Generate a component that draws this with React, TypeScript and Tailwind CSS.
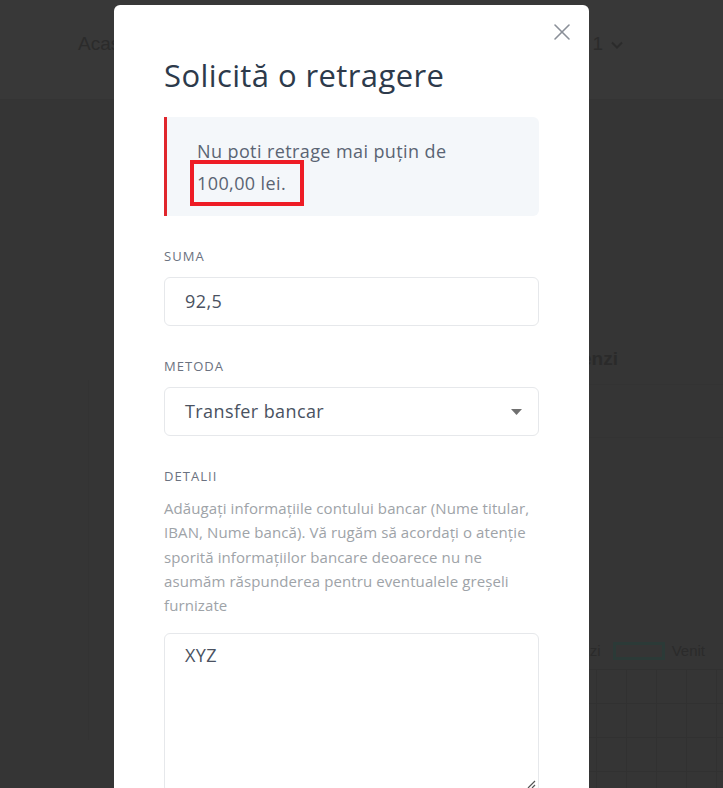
import { X } from "lucide-react"

function Backdrop() {
  return (
    <div className="absolute inset-0 bg-[#353535]" style={{ fontFamily: "'Liberation Sans', Arial, sans-serif" }}>
      {/* dimmed page header */}
      <div className="h-[100px] bg-[#383838] border-b border-[#343434] flex items-center justify-between pl-[78px] pr-[100px] pb-[10px]">
        <span className="text-[19px] text-[#2b2b2b]">Acasă</span>
        <span className="flex items-center gap-2 text-[19px] text-[#2b2b2b]">
          1
          <svg width="12" height="8" viewBox="0 0 12 8"><path d="M1 1.5l5 5 5-5" fill="none" stroke="#2b2b2b" strokeWidth="2" /></svg>
        </span>
      </div>
      {/* dimmed card title on the right */}
      <div className="absolute right-[105px] top-[345px] text-[19px] font-bold text-[#2a2a2a]">Cheltuienzi</div>
      <div className="absolute left-[560px] right-0 top-[384px] border-t border-[#333333]" />
      <div className="absolute left-[560px] right-0 top-[437px] border-t border-[#333333]" />
      {/* dimmed chart legend */}
      <div className="absolute right-[18px] top-[640px] flex items-center gap-[12px] text-[15px] text-[#2b2b2b]">
        <span>Cheltuienzi</span>
        <span className="block w-[52px] h-[18px] bg-transparent border-[3px] border-[#2b3a37]" />
        <span className="-ml-[5px]">Venit</span>
      </div>
      {/* dimmed chart grid */}
      <div className="absolute left-[566px] right-0 top-[669px] bottom-0 grid grid-cols-[repeat(6,30px)] grid-rows-[repeat(4,34px)]">
        {Array.from({ length: 24 }).map((_, i) => (
          <div key={i} className="border-l border-t border-[#313131]" />
        ))}
      </div>
      <div className="absolute left-[88px] top-[380px] h-[360px] border-l border-[#333333]" />
    </div>
  )
}

function Label({ children }: { children: React.ReactNode }) {
  return (
    <div className="text-[13px] leading-[20px] tracking-[0.08em] uppercase text-[#6b7280] mb-[11px]">{children}</div>
  )
}

export default function App() {
  return (
    <div className="relative w-[723px] h-[788px] overflow-hidden" style={{ fontFamily: "'Open Sans', 'Noto Sans', sans-serif" }}>
      <Backdrop />

      {/* Modal */}
      <div className="absolute left-[114px] top-[5px] w-[475px] h-[900px] bg-white rounded-[6px] px-[50px] pt-[51px]">
        <button className="absolute right-[13px] top-[13px] text-[#8a8f98]" aria-label="Închide">
          <X className="w-[28px] h-[28px]" strokeWidth={1.3} />
        </button>

        <h2 className="text-[31px] leading-[38px] tracking-[0.4px] text-[#2d3a4b]">Solicită o retragere</h2>

        <div className="relative mt-[23px] bg-[#f4f7fa] border-l-[3px] border-[#e0262d] rounded-r-[6px] pl-[30px] pr-[30px] pt-[18px] pb-[17px] text-[18px] leading-[32px] tracking-[0.4px] text-[#5a6473]">
          Nu poti retrage mai puțin de
          <br />
          100,00 lei.
          <div className="absolute left-[23px] top-[43px] w-[114px] h-[46px] border-[4px] border-[#ee1c25]" />
        </div>

        <div className="mt-[30px]">
          <Label>Suma</Label>
          <div className="h-[49px] border border-[#e6e8eb] rounded-[6px] px-[20px] flex items-center text-[18px] tracking-[0.4px] text-[#4a5261]">92,5</div>
        </div>

        <div className="mt-[30px]">
          <Label>Metoda</Label>
          <div className="h-[49px] border border-[#e6e8eb] rounded-[6px] pl-[20px] pr-[16px] flex items-center justify-between text-[18px] tracking-[0.4px] text-[#4a5261]">
            <span>Transfer bancar</span>
            <svg width="11" height="6" viewBox="0 0 11 6"><path d="M0 0h11L5.5 6z" fill="#707070" /></svg>
          </div>
        </div>

        <div className="mt-[30px]">
          <Label>Detalii</Label>
          <p className="text-[15px] leading-[24.3px] tracking-[0.1px] text-[#9ea3a8] -mt-[1px]">
            Adăugați informațiile contului bancar (Nume titular, IBAN, Nume bancă). Vă rugăm să acordați o atenție sporită informațiilor bancare deoarece nu ne asumăm răspunderea pentru eventualele greșeli furnizate
          </p>
          <div className="relative mt-[16px] h-[160px] border border-[#e6e8eb] rounded-[6px] px-[20px] pt-[8px] text-[18px] tracking-[0.4px] text-[#4a5261]">
            XYZ
            <svg className="absolute right-[2px] top-[146px]" width="9" height="9" viewBox="0 0 9 9">
              <path d="M8 1L1 8M8 5L5 8" stroke="#555" strokeWidth="1.2" />
            </svg>
          </div>
        </div>
      </div>
    </div>
  )
}
